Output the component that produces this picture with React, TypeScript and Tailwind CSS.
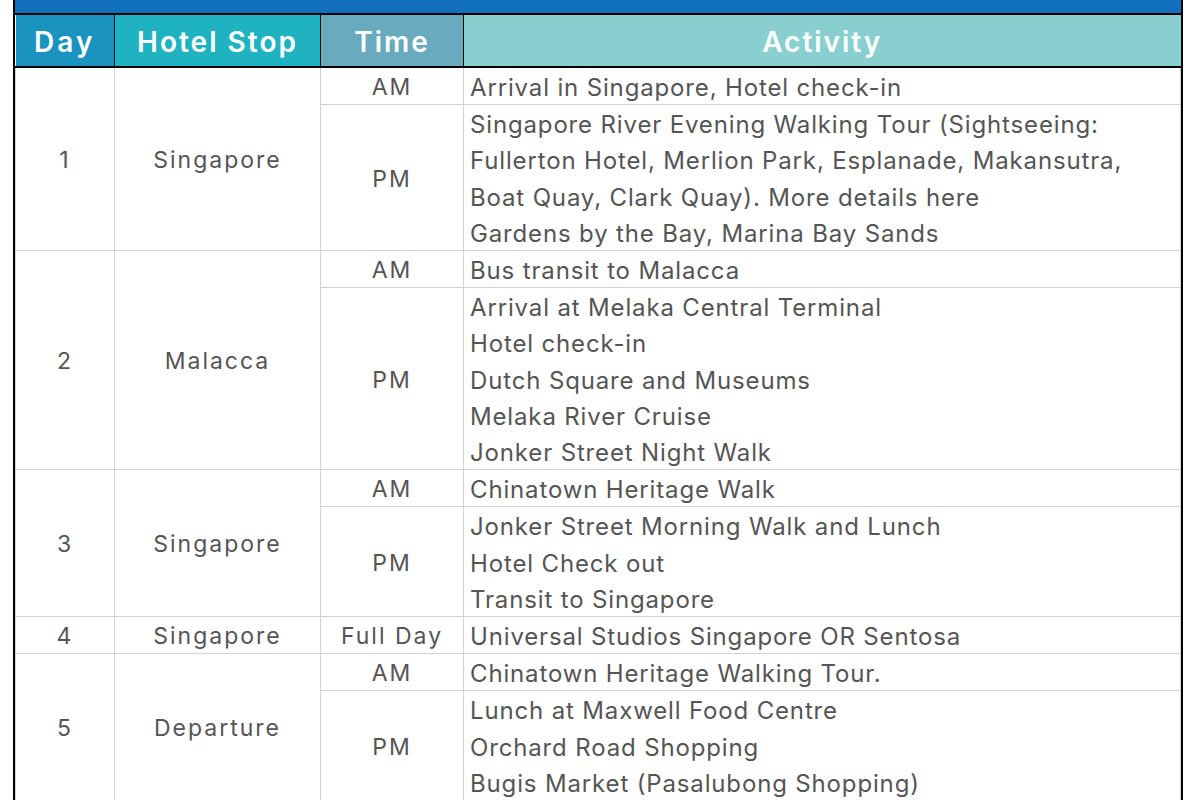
import React from "react";

type Slot = { time: string; lines: string[] };
type Day = { day: string; stop: string; slots: Slot[] };

const days: Day[] = [
  {
    day: "1",
    stop: "Singapore",
    slots: [
      { time: "AM", lines: ["Arrival in Singapore, Hotel check-in"] },
      {
        time: "PM",
        lines: [
          "Singapore River Evening Walking Tour (Sightseeing:",
          "Fullerton Hotel, Merlion Park, Esplanade, Makansutra,",
          "Boat Quay, Clark Quay). More details here",
          "Gardens by the Bay, Marina Bay Sands",
        ],
      },
    ],
  },
  {
    day: "2",
    stop: "Malacca",
    slots: [
      { time: "AM", lines: ["Bus transit to Malacca"] },
      {
        time: "PM",
        lines: [
          "Arrival at Melaka Central Terminal",
          "Hotel check-in",
          "Dutch Square and Museums",
          "Melaka River Cruise",
          "Jonker Street Night Walk",
        ],
      },
    ],
  },
  {
    day: "3",
    stop: "Singapore",
    slots: [
      { time: "AM", lines: ["Chinatown Heritage Walk"] },
      {
        time: "PM",
        lines: [
          "Jonker Street Morning Walk and Lunch",
          "Hotel Check out",
          "Transit to Singapore",
        ],
      },
    ],
  },
  {
    day: "4",
    stop: "Singapore",
    slots: [{ time: "Full Day", lines: ["Universal Studios Singapore OR Sentosa"] }],
  },
  {
    day: "5",
    stop: "Departure",
    slots: [
      { time: "AM", lines: ["Chinatown Heritage Walking Tour."] },
      {
        time: "PM",
        lines: [
          "Lunch at Maxwell Food Centre",
          "Orchard Road Shopping",
          "Bugis Market (Pasalubong Shopping)",
        ],
      },
    ],
  },
];

const bodyFont = { fontFamily: "Inter, Roboto, 'Liberation Sans', sans-serif" };

export default function App() {
  return (
    <div className="w-[1200px] h-[800px] overflow-hidden bg-white">
      <div className="ml-[13px] w-[1170px] border-x-2 border-black">
        <div className="h-[15px] overflow-hidden bg-[#1070bb] border-b-2 border-black flex justify-center">
          <span
            className="mt-[-29px] leading-none text-[30px] font-bold text-[#f5e51b] whitespace-nowrap"
            style={{ fontFamily: "Inter, sans-serif" }}
          >
            SINGAPORE &amp; MALACCA (SAMPLE)
          </span>
        </div>
        <table className="w-full table-fixed border-collapse">
          <colgroup>
            <col className="w-[99px]" />
            <col className="w-[206px]" />
            <col className="w-[143px]" />
            <col />
          </colgroup>
          <thead>
            <tr
              className="h-[52px] text-white text-[28px] tracking-[2px]"
              style={{ fontFamily: "Inter, sans-serif" }}
            >
              <th className="bg-[#1a93c1] border-r-[1.5px] border-b-2 border-black font-semibold pt-[3px] tracking-[3px]">Day</th>
              <th className="bg-[#1fb3c1] border-r-[1.5px] border-b-2 border-black font-semibold pt-[3px]">Hotel Stop</th>
              <th className="bg-[#6aaabe] border-r-[1.5px] border-b-2 border-black font-semibold pt-[3px]">Time</th>
              <th className="bg-[#89cfcf] border-b-2 border-black font-semibold pt-[3px]">Activity</th>
            </tr>
          </thead>
          <tbody className="text-[#555555]" style={bodyFont}>
            {days.map((d) =>
              d.slots.map((s, i) => (
                <tr key={d.day + s.time}>
                  {i === 0 && (
                    <>
                      <td
                        rowSpan={d.slots.length}
                        className="border border-[#d2d2d2] text-center align-middle text-[23px] leading-[30px] tracking-[2px] pt-[2px]"
                      >
                        {d.day}
                      </td>
                      <td
                        rowSpan={d.slots.length}
                        className="border border-[#d2d2d2] text-center align-middle text-[23px] leading-[30px] tracking-[2px] pt-[2px]"
                      >
                        {d.stop}
                      </td>
                    </>
                  )}
                  <td className="border border-[#d2d2d2] text-center align-middle text-[23px] leading-[30px] tracking-[2px] whitespace-nowrap pt-[2px]">
                    {s.time}
                  </td>
                  <td className="border border-[#d2d2d2] px-[6px] align-middle text-[24px] tracking-[0.85px]">
                    <div className="translate-y-[2px]">
                      {s.lines.map((l) => (
                        <div key={l} className="leading-[36.2px] whitespace-nowrap">
                          {l}
                        </div>
                      ))}
                    </div>
                  </td>
                </tr>
              ))
            )}
          </tbody>
        </table>
      </div>
    </div>
  );
}
